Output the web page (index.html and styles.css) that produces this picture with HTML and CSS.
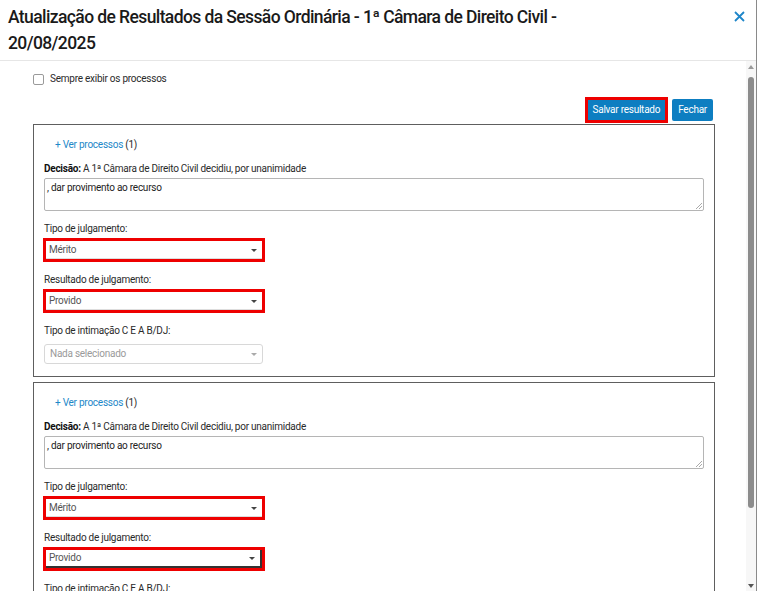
FILE: index.html
```html
<!DOCTYPE html>
<html lang="pt-BR">
<head>
<meta charset="utf-8">
<title>Atualização de Resultados</title>
<link rel="stylesheet" href="styles.css">
</head>
<body>
<div class="modal">
  <div class="modal-header">
    <h1 class="modal-title">Atualização de Resultados da Sessão Ordinária - 1ª Câmara de Direito Civil - 20/08/2025</h1>
    <button class="close" aria-label="Fechar">
      <svg width="11" height="11" viewBox="0 0 11 11"><path d="M1 1 L10 10 M10 1 L1 10" stroke="#1f86c9" stroke-width="1.8" fill="none"/></svg>
    </button>
  </div>
  <div class="modal-body">
    <div class="content">
      <label class="check-row"><span class="checkbox"></span>Sempre exibir os processos</label>
      <div class="actions">
        <span class="hl-btn"><button class="btn">Salvar resultado</button></span>
        <button class="btn btn-close">Fechar</button>
      </div>

      <div class="card">
        <div class="ver"><a class="link">+ Ver processos</a> (1)</div>
        <div class="decisao"><b>Decisão:</b> A 1ª Câmara de Direito Civil decidiu, por unanimidade</div>
        <div class="textarea">, dar provimento ao recurso<span class="grip"></span></div>
        <div class="field">
          <div class="label">Tipo de julgamento:</div>
          <div class="hl-select"><div class="select">Mérito<span class="caret"></span></div></div>
        </div>
        <div class="field">
          <div class="label">Resultado de julgamento:</div>
          <div class="hl-select"><div class="select">Provido<span class="caret"></span></div></div>
        </div>
        <div class="field">
          <div class="label">Tipo de intimação C E A B/DJ:</div>
          <div class="select disabled">Nada selecionado<span class="caret"></span></div>
        </div>
      </div>

      <div class="card">
        <div class="ver"><a class="link">+ Ver processos</a> (1)</div>
        <div class="decisao"><b>Decisão:</b> A 1ª Câmara de Direito Civil decidiu, por unanimidade</div>
        <div class="textarea">, dar provimento ao recurso<span class="grip"></span></div>
        <div class="field">
          <div class="label">Tipo de julgamento:</div>
          <div class="hl-select"><div class="select">Mérito<span class="caret"></span></div></div>
        </div>
        <div class="field">
          <div class="label">Resultado de julgamento:</div>
          <div class="hl-select"><div class="select focused">Provido<span class="caret"></span></div></div>
        </div>
        <div class="field">
          <div class="label">Tipo de intimação C E A B/DJ:</div>
          <div class="select disabled">Nada selecionado<span class="caret"></span></div>
        </div>
      </div>
    </div>
    <div class="scrollbar">
      <span class="arrow up"></span>
      <span class="thumb"></span>
      <span class="track"></span>
      <span class="arrow down"></span>
    </div>
  </div>
</div>
</body>
</html>
```

FILE: styles.css
```css
* { box-sizing: border-box; }
html, body { margin: 0; padding: 0; height: 100%; overflow: hidden; background: #fff; }
body { font-family: Roboto, "Liberation Sans", Arial, sans-serif; color: #222; }

.modal {
  width: 757px;
  height: 591px;
  border-right: 1px solid #8a8a8a;
  display: flex;
  flex-direction: column;
  background: #fff;
}

.modal-header {
  display: flex;
  align-items: flex-start;
  padding: 4px 8px 4px 8px;
  border-bottom: 1px solid #e6e6e6;
  height: 61px;
}
.modal-title {
  margin: 0;
  flex: 1;
  font-size: 17.5px;
  line-height: 26px;
  font-weight: 500;
  letter-spacing: -0.6px;
  color: #1a1a1a;
  padding-right: 120px;
}
.close {
  background: none;
  border: 0;
  padding: 0;
  margin: 7px 3px 0 0;
  width: 11px;
  height: 11px;
  line-height: 0;
}

.modal-body {
  flex: 1;
  display: flex;
  min-height: 0;
  overflow: hidden;
}
.content {
  flex: 1;
  padding: 10px 31px 0 33px;
  font-size: 10px;
  letter-spacing: -0.25px;
  color: #2a2a2a;
}

.check-row {
  display: flex;
  align-items: center;
  gap: 6px;
  line-height: 16px;
  font-size: 10px;
  color: #2a2a2a;
}
.checkbox {
  width: 11px;
  height: 11px;
  border: 1px solid #9a9a9a;
  border-radius: 2px;
  background: #fff;
}

.actions {
  display: flex;
  justify-content: flex-end;
  align-items: center;
  gap: 4px;
  margin-top: 10px;
  margin-right: 2px;
  height: 26px;
}
.hl-btn {
  border: 3px solid #ee0000;
  display: flex;
}
.btn {
  border: 0;
  background: #0d7ec1;
  color: #fff;
  font-family: Roboto, "Liberation Sans", Arial, sans-serif;
  font-size: 10px;
  letter-spacing: -0.25px;
  height: 20px;
  padding: 0 5px;
  line-height: 20px;
}
.btn-close {
  height: 22px;
  border-radius: 2px;
  padding: 0 6px;
}

.card {
  margin-top: 1px;
  border: 1px solid #5e5e5e;
  padding: 12px 10px 12px 10px;
  margin-bottom: 5px;
}
.ver {
  margin-left: 11px;
  line-height: 16px;
  font-size: 10px;
  color: #2a2a2a;
}
.link { color: #1d88c8; }
.decisao {
  margin-top: 8px;
  line-height: 16px;
  font-size: 10px;
  color: #2a2a2a;
}
.decisao b { color: #111; font-weight: 700; }
.textarea {
  position: relative;
  margin-top: 1px;
  height: 33px;
  border: 1px solid #b5b5b5;
  border-radius: 2px;
  padding: 2px 2px;
  font-size: 10px;
  line-height: 14px;
  color: #222;
}
.grip {
  position: absolute;
  right: 1px;
  bottom: 1px;
  width: 6px;
  height: 6px;
  background: linear-gradient(135deg, transparent 45%, #aaa 46%, #aaa 54%, transparent 55%, transparent 70%, #aaa 71%, #aaa 79%, transparent 80%);
}

.field { margin-top: 10px; }
.label {
  line-height: 16px;
  font-size: 10px;
  color: #2a2a2a;
  margin-bottom: 1px;
}
.hl-select {
  width: 222px;
  border: 3px solid #ee0000;
  margin-left: -1px;
}
.select {
  position: relative;
  height: 18px;
  line-height: 18px;
  padding-left: 3px;
  font-size: 10px;
  color: #555;
  background: #fff;
  border-bottom: 1px solid #ddd;
}
.select.focused {
  border-right: 2px solid #333;
  border-bottom: 2px solid #333;
  line-height: 16px;
}
.select.disabled {
  width: 219px;
  height: 20px;
  line-height: 18px;
  border: 1px solid #d8d8d8;
  border-radius: 3px;
  color: #9a9a9a;
  padding-left: 5px;
  margin-top: 5px;
}
.caret {
  position: absolute;
  right: 5px;
  top: 50%;
  margin-top: -1px;
  border-left: 3px solid transparent;
  border-right: 3px solid transparent;
  border-top: 3px solid #444;
}
.select.disabled .caret { border-top-color: #aaa; right: 5px; }

.scrollbar {
  width: 10px;
  background: #f7f7f7;
  display: flex;
  flex-direction: column;
  align-items: center;
  padding: 4px 0 3px;
}
.arrow {
  width: 0;
  height: 0;
  border-left: 3px solid transparent;
  border-right: 3px solid transparent;
}
.arrow.up { border-bottom: 4px solid #9a9a9a; }
.arrow.down { border-top: 4px solid #555; }
.thumb {
  margin-top: 8px;
  width: 6px;
  height: 431px;
  border-radius: 3px;
  background: #8c8c8c;
}
.track { flex: 1; }
```
